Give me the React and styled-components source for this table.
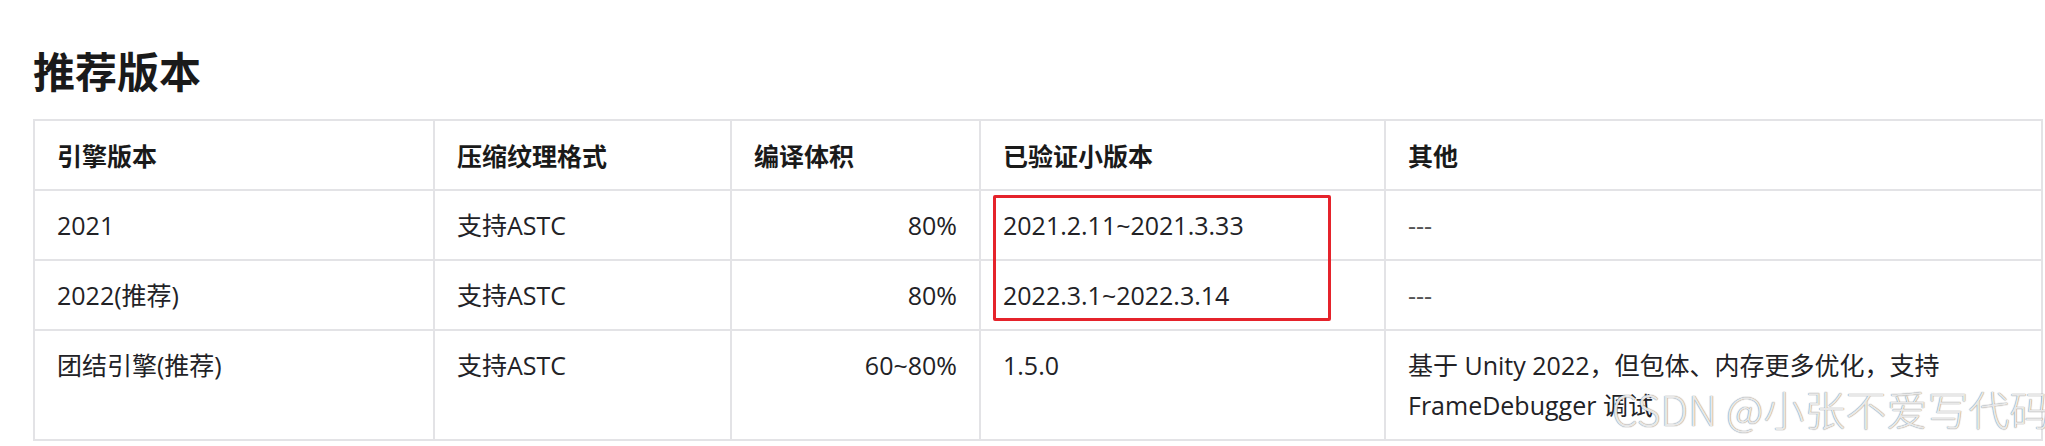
import React from "react";
import styled, { createGlobalStyle } from "styled-components";

// 表格数据
const columns = [
  { key: "engine", title: "引擎版本", width: 400 },
  { key: "format", title: "压缩纹理格式", width: 297 },
  { key: "size", title: "编译体积", width: 249, right: true },
  { key: "version", title: "已验证小版本", width: 405 },
  { key: "other", title: "其他" },
];

const rows = [
  {
    engine: "2021",
    format: "支持ASTC",
    size: "80%",
    version: "2021.2.11~2021.3.33",
    other: "---",
  },
  {
    engine: "2022(推荐)",
    format: "支持ASTC",
    size: "80%",
    version: "2022.3.1~2022.3.14",
    other: "---",
  },
  {
    engine: "团结引擎(推荐)",
    format: "支持ASTC",
    size: "60~80%",
    version: "1.5.0",
    other: "基于 Unity 2022，但包体、内存更多优化，支持 FrameDebugger 调试",
  },
];

const GlobalStyle = createGlobalStyle`
  html, body {
    margin: 0;
    padding: 0;
    background: #fff;
  }
  body {
    font-family: "Open Sans", "Noto Sans CJK SC", sans-serif;
    color: #222226;
  }
`;

const Page = styled.div`
  position: relative;
  height: 446px;
  overflow: hidden;
  padding-left: 33px;
  box-sizing: border-box;
`;

const Title = styled.h2`
  margin: 0 0 21px;
  padding-top: 42px;
  font-size: 42px;
  line-height: 56px;
  font-weight: 700;
  color: #1a1a1a;
  font-family: "Noto Sans CJK SC", sans-serif;
`;

const TableWrap = styled.div`
  position: relative;
  width: 2010px;
`;

const Table = styled.table`
  width: 100%;
  table-layout: fixed;
  border-collapse: collapse;
  font-size: 25px;
  line-height: 40px;
`;

const Th = styled.th`
  border: 2px solid #e3e3e6;
  padding: 14px 22px;
  text-align: left;
  font-weight: 700;
  color: #1a1a1a;
  font-family: "Noto Sans CJK SC", sans-serif;
`;

const Td = styled.td`
  border: 2px solid #e3e3e6;
  padding: 14px 22px;
  vertical-align: top;
  text-align: ${(p) => (p.$right ? "right" : "left")};
  color: ${(p) => (p.$muted ? "#555" : "#222226")};
`;

const RedBox = styled.div`
  position: absolute;
  left: 960px;
  top: 76px;
  width: 338px;
  height: 126px;
  box-sizing: border-box;
  border: 3px solid #e5232b;
  border-radius: 2px;
  pointer-events: none;
`;

const Watermark = styled.div`
  position: absolute;
  left: 1612px;
  top: 380px;
  font-size: 41px;
  line-height: 56px;
  font-weight: 300;
  white-space: nowrap;
  font-family: "Noto Sans CJK SC", sans-serif;
  color: rgba(255, 255, 255, 0.85);
  text-shadow: 0 0 1px rgba(60, 60, 60, 0.6), 0 0 1px rgba(60, 60, 60, 0.45);
`;

const App = () => {
  return (
    <Page>
      <GlobalStyle />
      <Title>推荐版本</Title>
      <TableWrap>
        <Table>
          <colgroup>
            {columns.map((col) => (
              <col key={col.key} style={col.width ? { width: col.width } : undefined} />
            ))}
          </colgroup>
          <thead>
            <tr>
              {columns.map((col) => (
                <Th key={col.key}>{col.title}</Th>
              ))}
            </tr>
          </thead>
          <tbody>
            {rows.map((row) => (
              <tr key={row.engine}>
                {columns.map((col) => (
                  <Td key={col.key} $right={col.right} $muted={row[col.key] === "---"}>
                    {row[col.key]}
                  </Td>
                ))}
              </tr>
            ))}
          </tbody>
        </Table>
        <RedBox />
      </TableWrap>
      <Watermark>CSDN @小张不爱写代码</Watermark>
    </Page>
  );
};

export default App;
